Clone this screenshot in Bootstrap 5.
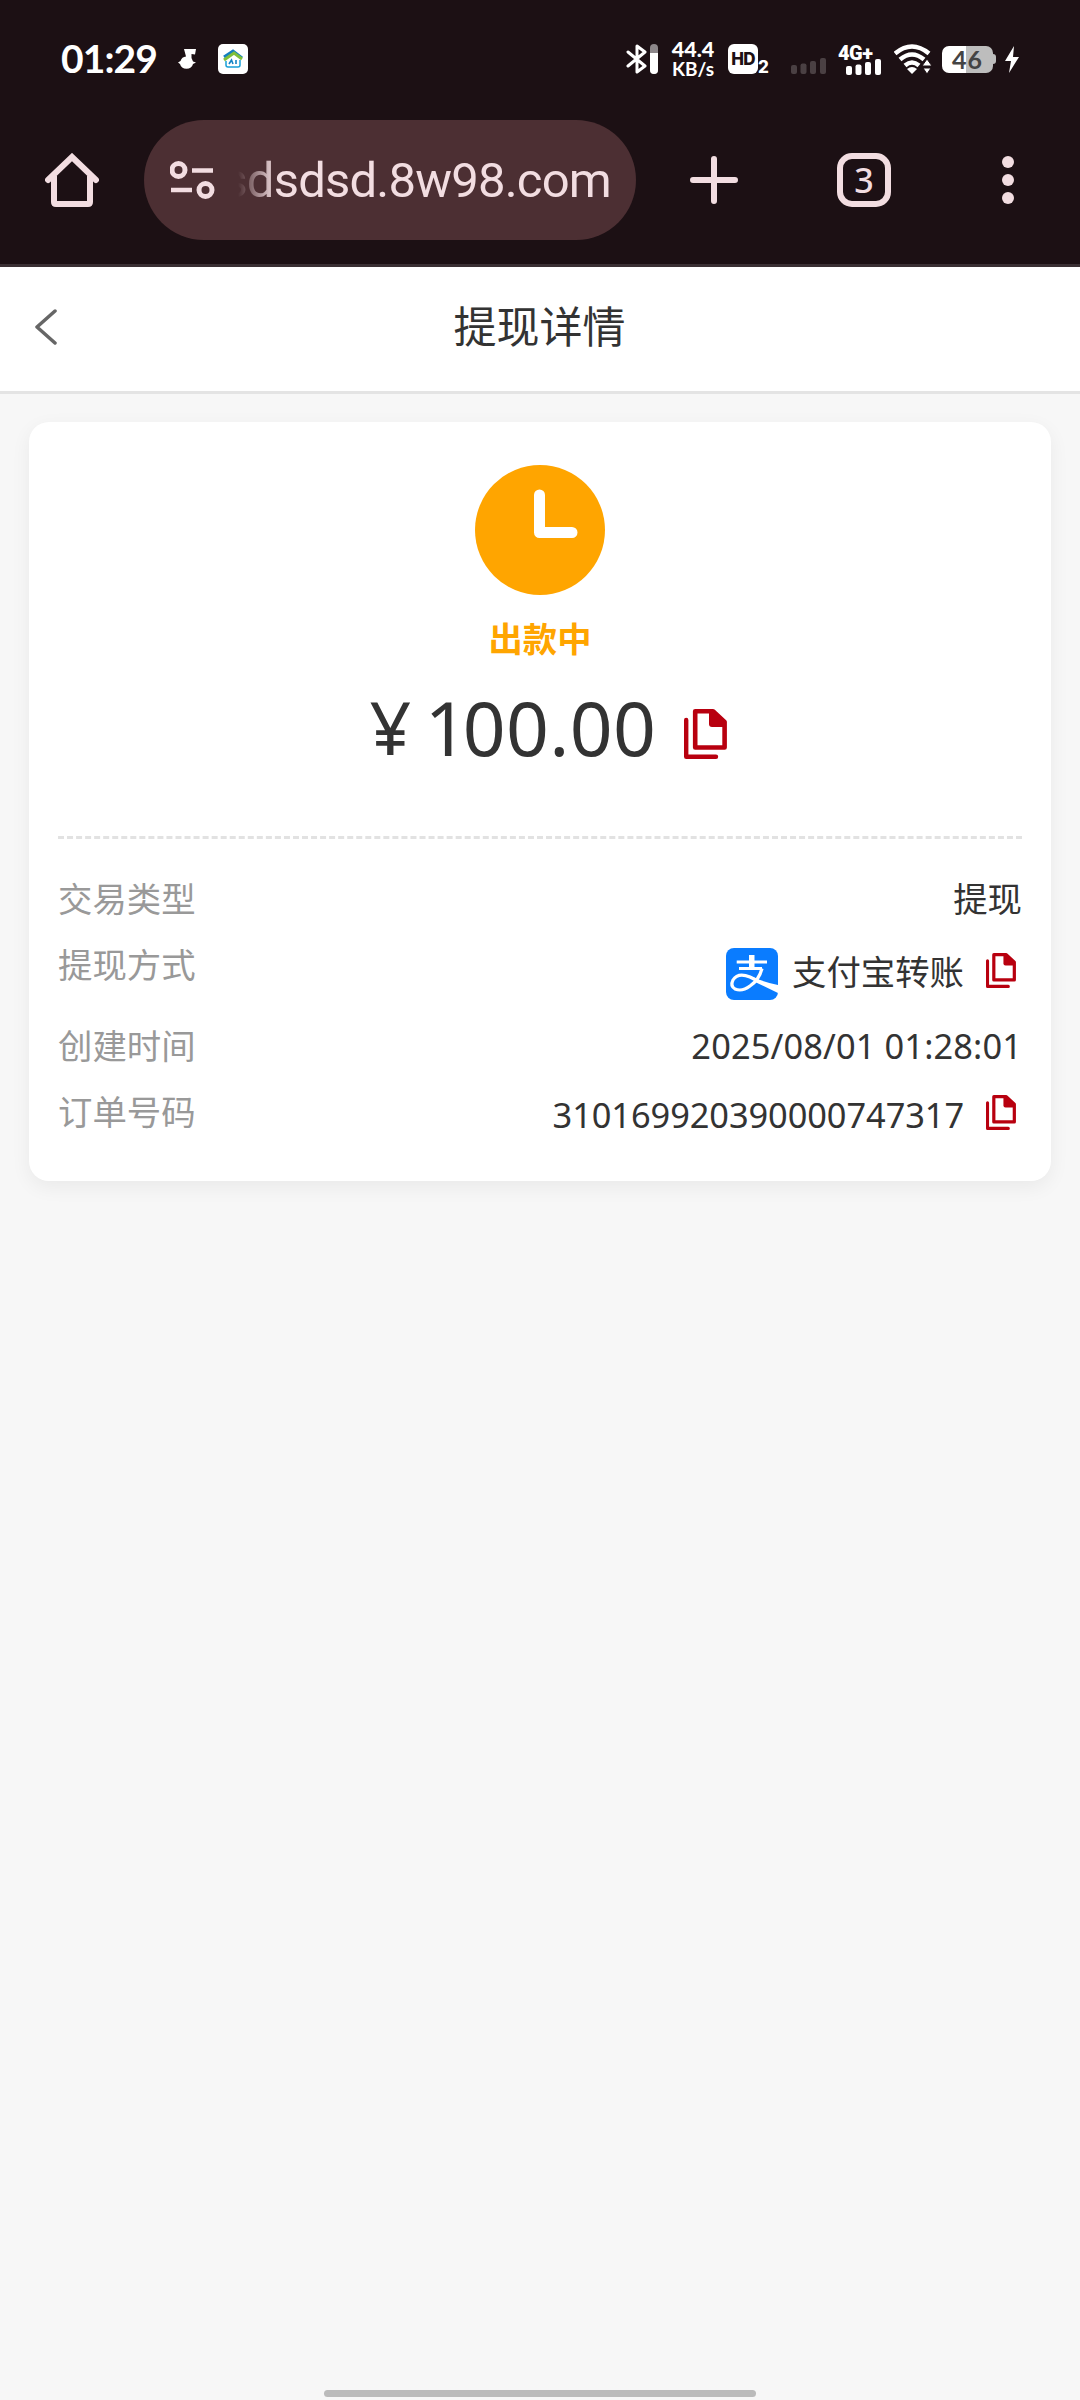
<!DOCTYPE html>
<html lang="zh-CN">
<head>
<meta charset="utf-8">
<meta name="viewport" content="width=device-width, initial-scale=1">
<title>提现详情</title>
<link href="https://cdn.jsdelivr.net/npm/bootstrap@5.3.0/dist/css/bootstrap.min.css" rel="stylesheet">
<style>
  body { background:#f7f7f7; color:#333; font-family:"Noto Sans","Noto Sans CJK SC",sans-serif; min-height:2400px; }
  svg { display:block; flex:none; }
  .chrome { background:#1c1014; color:#f2dde1; height:267px; border-bottom:3px solid #3a2f33; }
  .status { height:118px; padding:0 61px 0 61px; color:#fff; }
  .clock-time { font:700 39px/40px Lato,sans-serif; letter-spacing:-.9px; width:117px; padding-bottom:2px; }
  .rate { font:900 21.5px/20px Lato,sans-serif; width:50px; }
  .rate span { display:block; }
  .rate .unit { font-size:19px; font-weight:700; }
  .hd-badge { width:30px; height:30px; border-radius:6px; background:#fff; color:#1c1014; font:800 17px/30px Inter,sans-serif; letter-spacing:-.8px; }
  .sim-no { font:800 17px/17px Inter,sans-serif; width:12px; }
  .net-label { font:900 20px/18px Roboto,sans-serif; letter-spacing:-.5px; }
  .battery { width:51px; height:27px; border-radius:7px; background:linear-gradient(90deg,#fff 24px,#bdbdbd 24px); color:#444; font:700 25px/27px Lato,sans-serif; letter-spacing:1px; }
  .nub { width:3px; height:10px; background:#bdbdbd; border-radius:0 3px 3px 0; }
  .toolbar { height:124px; padding-left:45px; }
  .omnibox { width:492px; height:120px; border-radius:60px; background:#4c2f33; margin-left:45px; padding:0 25px 0 26px; }
  .url { font:400 49px/60px Roboto,sans-serif; width:373px; margin-left:22px; overflow:hidden; letter-spacing:-.8px; padding-top:1px;
    -webkit-mask-image:linear-gradient(90deg,transparent 0,#000 38px); mask-image:linear-gradient(90deg,transparent 0,#000 38px); }
  .tab-count { width:54px; height:54px; border:6px solid #f2dde1; border-radius:15px; font:500 34px/43px "Noto Sans",sans-serif; }
  .page-head { height:127px; border-bottom:3px solid #e4e4e4; background:#fff; padding:0 36px 4px 35px; }
  .page-title { font-size:43px; line-height:60px; }
  .detail-card { margin:28px 29px 0; border-radius:20px; padding:43px 29px 28px; height:759px; box-shadow:0 6px 20px rgba(0,0,0,.06); }
  .state { color:#ffa500; font-size:34.3px; font-weight:700; line-height:50px; margin-top:19px; }
  .amount { font-size:75px; line-height:90px; letter-spacing:.4px; margin-top:18px; padding-left:17px; }
  .amount .yen { font-size:73px; margin-right:13px; }
  .amount .lead-digit { letter-spacing:-5px; }
  .divider { border-top:3px dashed #e2e2e2; margin-top:64px; margin-bottom:35px; }
  .item { font-size:34.4px; line-height:50px; padding-bottom:16px; }
  .item-label { color:#999; }
  .order-no { letter-spacing:-.08px; padding-top:3px; }
  .home-bar { width:432px; height:7px; border-radius:4px; background:#bbb; margin-bottom:3px; }
</style>
</head>
<body class="d-flex flex-column">

<svg width="0" height="0" class="position-absolute" aria-hidden="true">
  <symbol id="copy" viewBox="0 0 43 50">
    <path d="M2.200 11V47.800H32" fill="none" stroke="#b8000f" stroke-width="4.400" stroke-linecap="round" stroke-linejoin="round"/>
    <path d="M11.200 2.300H29L40.600 13V38.500H11.200Z" fill="none" stroke="#b8000f" stroke-width="4.600" stroke-linejoin="round"/>
    <path d="M25 2H30L41 13V18H28Q25 18 25 15Z" fill="#b8000f"/>
  </symbol>
</svg>

<header class="chrome flex-shrink-0">
  <div class="status d-flex align-items-center">
    <div class="clock-time">01:29</div>
    <svg width="18" height="21" viewBox="0 0 18 21" fill="#fff"><path d="M6 0H18L17 5.500L13.500 5V9L15 12.500L18 13.500L15 15A6.700 6.300 0 0 1 2 15L0 13.500L2.500 12A6.500 6.500 0 0 1 8 7.500Z"/></svg>
    <svg width="30" height="30" viewBox="0 0 30 30" style="margin-left:22px"><rect width="30" height="30" rx="5" fill="#fff"/><path d="M6 13L15 7L24 14" fill="none" stroke="#147fc0" stroke-width="3"/><path d="M6 16L16 9L24 15" fill="none" stroke="#7fbf3a" stroke-width="3"/><path d="M8 17V21Q8 23 10 23H20Q22 23 22 21V16" fill="none" stroke="#18a0d8" stroke-width="1.500"/><path d="M11 20L13.500 16L15 20M18 16V20" fill="none" stroke="#1583c4" stroke-width="1.600"/></svg>

    <svg class="ms-auto" width="33" height="30" viewBox="0 0 33 30"><path d="M2 8L19 22L11 28V2L19 8L2 22" fill="none" stroke="#fff" stroke-width="3" stroke-linejoin="round" stroke-linecap="round"/><rect x="24" y="0" width="8" height="30" rx="4" fill="#8d878a"/><path d="M24 9H32V26A4 4 0 0 1 24 26Z" fill="#fff"/></svg>
    <div class="rate text-center" style="margin-left:9px"><span>44.4</span><span class="unit">KB/s</span></div>
    <div class="hd-badge text-center" style="margin-left:10px">HD</div>
    <div class="sim-no align-self-center pt-3">2</div>
    <svg width="35" height="16" viewBox="0 0 35 16" fill="#4a4043" style="margin:14px 0 0 21px"><rect y="7" width="6" height="9" rx="2"/><rect x="9.500" y="5.500" width="6" height="10.500" rx="2"/><rect x="19" y="3" width="6" height="13" rx="2"/><rect x="29" width="6" height="16" rx="2"/></svg>
    <div style="margin-left:12px">
      <div class="net-label">4G+</div>
      <svg width="35" height="16" viewBox="0 0 35 16" fill="#fff" class="ms-2" style="margin-top:-3px"><rect y="7" width="6" height="9" rx="2"/><rect x="9.500" y="5.500" width="6" height="10.500" rx="2"/><rect x="19" y="3" width="6" height="13" rx="2"/><rect x="29" width="6" height="16" rx="2"/></svg>
    </div>
    <svg width="38" height="30" viewBox="0 0 38 30" style="margin-left:13px"><g fill="none" stroke="#fff" stroke-width="4.500"><path d="M1 9.500Q18 -4.500 35 9.500"/><path d="M6 15.500Q18 5.500 30 15.500"/><path d="M11 21.500Q18 15.500 25 21.500"/></g><path d="M13 25Q18 21 23 25L18 30Z" fill="#fff"/><path d="M33 15L38 22H28Z M29 24H37L33 30Z" fill="#fff" stroke="#1c1014" stroke-width="1"/></svg>
    <div class="battery text-center" style="margin-left:10px">46</div>
    <div class="nub"></div>
    <svg width="14" height="27" viewBox="0 0 14 27" style="margin-left:9px"><path d="M9 0L0 15H6L4 27L14 11H8Z" fill="#fff"/></svg>
  </div>

  <nav class="toolbar d-flex align-items-center">
    <svg width="54" height="54" viewBox="0 0 54 54" fill="none" stroke="#f2dde1" stroke-width="6"><path d="M3 27L27 4L51 27" stroke-linecap="round"/><path d="M9 23V49Q9 51 11 51H43Q45 51 45 49V23"/></svg>
    <div class="omnibox d-flex align-items-center">
      <svg width="46" height="40" viewBox="0 0 46 40" fill="none" stroke="#f2dde1"><g stroke-width="5"><circle cx="8.500" cy="10" r="6.500"/><circle cx="35.500" cy="30" r="6.500"/></g><path d="M22 10.500H43M1 30H22" stroke-width="4.600"/></svg>
      <div class="url d-flex justify-content-end text-nowrap">sdsdsd.8w98.com</div>
    </div>
    <svg width="48" height="48" viewBox="0 0 48 48" style="margin-left:54px"><path d="M24 3V45M3 24H45" stroke="#f2dde1" stroke-width="6" stroke-linecap="round"/></svg>
    <div class="tab-count text-center" style="margin-left:99px">3</div>
    <svg width="12" height="48" viewBox="0 0 12 48" fill="#f2dde1" style="margin-left:111px"><circle cx="6" cy="6" r="6"/><circle cx="6" cy="24" r="6"/><circle cx="6" cy="42" r="6"/></svg>
  </nav>
</header>

<div class="page-head d-flex align-items-center justify-content-between flex-shrink-0">
  <svg width="22" height="36" viewBox="0 0 22 36"><path d="M20 2L2 18L20 34" fill="none" stroke="#666" stroke-width="3.500" stroke-linecap="round" stroke-linejoin="round"/></svg>
  <div class="page-title">提现详情</div>
  <span style="width:22px"></span>
</div>

<main class="card border-0 detail-card flex-shrink-0">
  <div class="d-flex flex-column align-items-center">
    <svg width="130" height="130" viewBox="0 0 130 130"><circle cx="65" cy="65" r="65" fill="#ffa500"/><path d="M64.500 30V67.500H97" fill="none" stroke="#fff" stroke-width="11" stroke-linecap="round" stroke-linejoin="round"/></svg>
    <div class="state">出款中</div>
    <div class="amount d-flex align-items-center">
      <span class="yen">¥</span><span><span class="lead-digit">1</span>00.00</span>
      <svg width="43" height="50" style="margin-left:28px;margin-top:13px"><use href="#copy"/></svg>
    </div>
  </div>
  <div class="divider"></div>
  <div class="item d-flex justify-content-between">
    <span class="item-label">交易类型</span><span>提现</span>
  </div>
  <div class="item d-flex justify-content-between">
    <span class="item-label">提现方式</span>
    <span class="d-flex align-items-center" style="height:65px">
      <svg width="52" height="52" viewBox="0 0 52 52" style="margin-top:2px"><rect width="52" height="52" rx="8" fill="#0a7cff"/><path d="M10.700 14H41M13 20.500H36" stroke="#fff" stroke-width="3"/><path d="M23 7H28.500V20H23Z" fill="#fff"/><path d="M36 20.500Q33 32 24 38Q16 44 9 41Q4 38 7 32Q12 24 24 29L32 33" fill="none" stroke="#fff" stroke-width="3.200"/><path d="M28 29.500Q38 34 52 37V45L28 33.500Z" fill="#fff"/></svg>
      <span style="margin:-2px 0 0 14px">支付宝转账</span>
      <svg width="30" height="35" style="margin:0 6px 5px 22px"><use href="#copy"/></svg>
    </span>
  </div>
  <div class="item d-flex justify-content-between">
    <span class="item-label">创建时间</span><span style="letter-spacing:.12px">2025/08/01 01:28:01</span>
  </div>
  <div class="item d-flex justify-content-between">
    <span class="item-label">订单号码</span>
    <span class="d-flex align-items-center"><span class="order-no">310169920390000747317</span>
      <svg width="30" height="35" style="margin:0 6px 2px 22px"><use href="#copy"/></svg>
    </span>
  </div>
</main>

<div class="home-bar mt-auto mx-auto flex-shrink-0"></div>
<script src="https://cdn.jsdelivr.net/npm/bootstrap@5.3.0/dist/js/bootstrap.bundle.min.js"></script>
</body>
</html>
